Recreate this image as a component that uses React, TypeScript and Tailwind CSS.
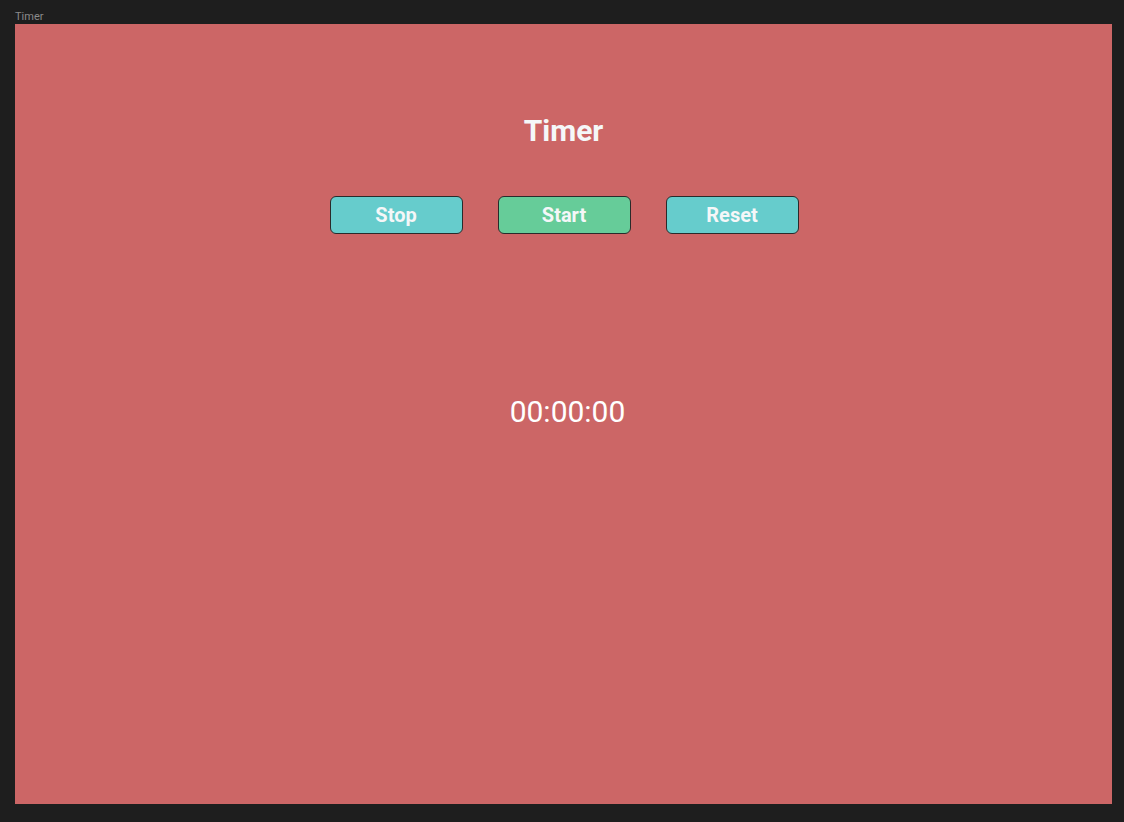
const App = () => {
  return (
    <div className="w-[1124px] h-[822px] bg-[#1e1e1e] font-['Roboto',sans-serif] flex flex-col">
      <div className="h-[24px] pl-[15px] pt-[10px] text-[11px] leading-[13px] text-[#8a8a8a]">Timer</div>
      <div className="ml-[15px] w-[1097px] h-[780px] bg-[#cc6666] flex flex-col items-center">
        <h1 className="mt-[92px] text-[30px] leading-[30px] font-bold text-[#f5f7f8]">Timer</h1>
        <div className="mt-[50px] pl-[1px] flex gap-[35px]">
          <button className="w-[133px] h-[38px] rounded-[6px] border border-[#2a2a2a] bg-[#66cccc] text-[20px] font-bold text-[#f5f7f8]">
            Stop
          </button>
          <button className="w-[133px] h-[38px] rounded-[6px] border border-[#2a2a2a] bg-[#66cc99] text-[20px] font-bold text-[#f5f7f8]">
            Start
          </button>
          <button className="w-[133px] h-[38px] rounded-[6px] border border-[#2a2a2a] bg-[#66cccc] text-[20px] font-bold text-[#f5f7f8]">
            Reset
          </button>
        </div>
        <div className="mt-[160px] pl-[8px] text-[30px] leading-[36px] text-white">00:00:00</div>
      </div>
    </div>
  );
};

export default App;
